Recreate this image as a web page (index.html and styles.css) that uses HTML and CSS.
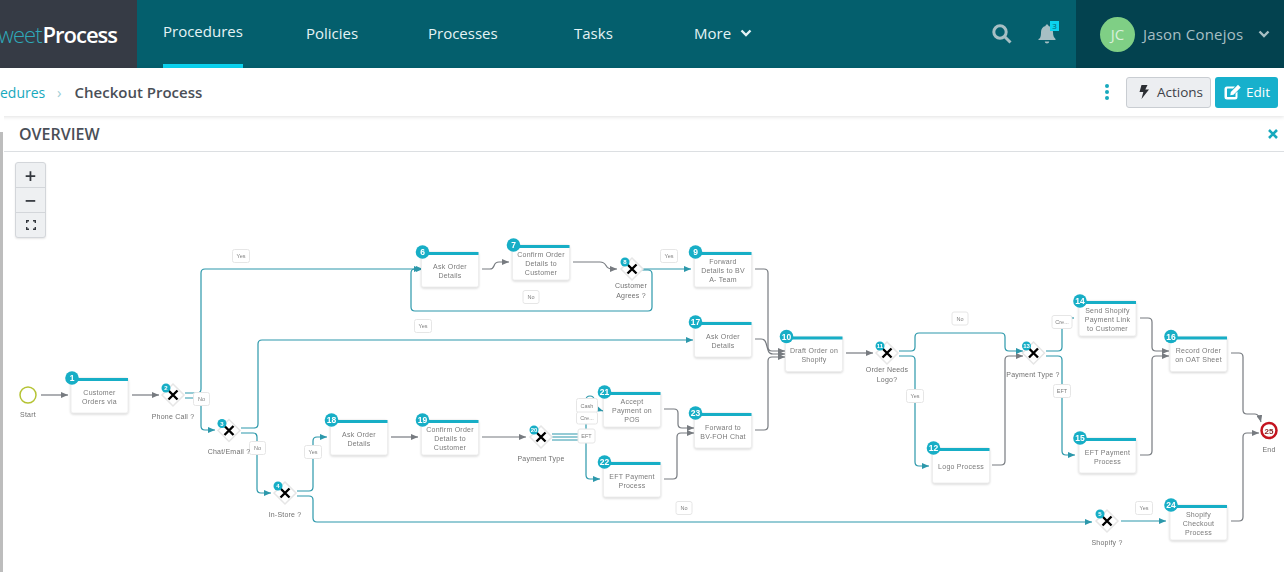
FILE: index.html
```html
<!DOCTYPE html>
<html>
<head>
  <title>Checkout Process</title>
  <link rel="stylesheet" href="styles.css">
</head>
<body>
  <header class="topbar">
    <div class="logo"><span class="logo-light">weet</span><span class="logo-bold">Process</span></div>
    <nav class="nav">
      <a class="nav-item active">Procedures</a>
      <a class="nav-item">Policies</a>
      <a class="nav-item">Processes</a>
      <a class="nav-item">Tasks</a>
      <a class="nav-item more">More
        <svg class="chevron" width="12" height="8" viewBox="0 0 12 8"><path d="M1.5 1.5 6 6l4.500-4.500"/></svg>
      </a>
    </nav>
    <div class="tools">
      <svg class="search-icon" width="22" height="22" viewBox="0 0 22 22"><circle cx="9" cy="9" r="6.200"/><path d="M13.500 13.500 19.500 19.500"/></svg>
      <div class="bell">
        <svg width="20" height="22" viewBox="0 0 20 22"><path d="M10 1.500c1 0 1.500.7 1.500 1.500 3 .7 4.500 3 4.500 6 0 4 1 5.500 2.500 7v1H1.500v-1C3 15.500 4 14 4 9c0-3 1.500-5.300 4.500-6 0-.8.500-1.500 1.500-1.500zM7.800 18.500h4.400c0 1.200-1 2-2.200 2s-2.200-.8-2.200-2z"/></svg>
        <span class="bell-count">3</span>
      </div>
    </div>
    <div class="user">
      <div class="avatar">JC</div>
      <span class="user-name">Jason Conejos</span>
      <svg class="chevron" width="12" height="8" viewBox="0 0 12 8"><path d="M1.500 1.500 6 6l4.500-4.500"/></svg>
    </div>
  </header>

  <div class="subbar">
    <a class="crumb-link">edures</a>
    <span class="crumb-sep">›</span>
    <span class="crumb-current">Checkout Process</span>
    <div class="subbar-actions">
      <div class="kebab"><i></i><i></i><i></i></div>
      <button class="btn btn-actions">
        <svg width="12" height="16" viewBox="0 0 12 16"><path d="M3.500 1h6L7.300 5.500H11L3.500 15l1.800-7H1.500z"/></svg>
        Actions
      </button>
      <button class="btn btn-edit">
        <svg width="18" height="16" viewBox="0 0 18 16"><path d="M3 2.500h8L9 4.500H3.500a.5.5 0 0 0-.5.500v7.500a.5.5 0 0 0 .5.500H11a.5.5 0 0 0 .5-.5V9.500l2-2v5.500a2.500 2.500 0 0 1-2.500 2.500H3A2.500 2.500 0 0 1 .5 13V5A2.500 2.500 0 0 1 3 2.500zM14 .8l2.700 2.700-7.200 7.200-3.200.5.500-3.200z"/></svg>
        Edit
      </button>
    </div>
  </div>

  <main class="panel">
    <div class="panel-head">
      <h2 class="panel-title">OVERVIEW</h2>
      <svg class="panel-close" width="12" height="12" viewBox="0 0 12 12"><path d="M2 2l8 8M10 2l-8 8"/></svg>
    </div>
    <div class="stage">
      <div class="zoom-controls">
        <div class="zoom-btn">+</div>
        <div class="zoom-btn">−</div>
        <div class="zoom-btn">
          <svg width="10" height="10" viewBox="0 0 10 10"><path d="M.7 3V.7H3M7 .7h2.300V3M9.300 7v2.300H7M3 9.300H.7V7"/></svg>
        </div>
      </div>

      <svg class="diagram" width="1284" height="420" viewBox="0 152 1284 420">
        <defs>
          <marker id="arrow-gray" markerUnits="userSpaceOnUse" markerWidth="7" markerHeight="6" refX="7" refY="3" orient="auto"><path d="M0 0 7 3 0 6z" fill="#777b80"/></marker>
          <marker id="arrow-teal" markerUnits="userSpaceOnUse" markerWidth="7" markerHeight="6" refX="7" refY="3" orient="auto"><path d="M0 0 7 3 0 6z" fill="#2c98ab"/></marker>
        </defs>

        <!-- flechas grises -->
        <g class="edge edge-gray">
          <path d="M41 395H68"/>
          <path d="M132 395H159"/>
          <path d="M391 437H418"/>
          <path d="M482 437H526"/>
          <path d="M482 269H490C496 269 492 262 499 262H509"/>
          <path d="M573 262H600C608 262 604 269 612 269H617"/>
          <path d="M664 409H674q4 0 4 4V424q0 4 4 4H694"/>
          <path d="M664 479H673q4 0 4-4V437q0-4 4-4H694"/>
          <path d="M755 269H764q4 0 4 4V347q0 4 4 4H785"/>
          <path d="M755 339H761q4 0 5 4L768 350q1 4 5 4H785"/>
          <path d="M755 430H764q4 0 4-4V361q0-4 4-4H785"/>
          <path d="M846 353H873"/>
          <path d="M992 465H1001q4 0 4-4V360q0-4 4-4H1023"/>
          <path d="M1140 318H1148q4 0 4 4V347q0 4 4 4H1169"/>
          <path d="M1140 455H1148q4 0 4-4V360q0-4 4-4H1169"/>
          <path d="M1231 353H1239q4 0 4 4V410q0 4 4 4H1255q4 0 6 8"/>
          <path d="M1231 521H1239q4 0 4-4V437q0-4 4-4H1259"/>
        </g>

        <!-- flechas de las decisiones -->
        <g class="edge edge-teal">
          <path d="M185 393H197q4 0 4-4V273q0-4 4-4H421"/>
          <path d="M185 398H198q3 0 3 3V426q0 4 4 4H215"/>
          <path d="M241 428H254q4 0 4-4V344q0-4 4-4H693"/>
          <path d="M241 433H253q4 0 4 4V489q0 4 4 4H271"/>
          <path d="M297 491H309q4 0 4-4V441q0-4 4-4H327"/>
          <path d="M297 496H309q4 0 4 4V518q0 4 4 4H1092"/>
          <path d="M552 434H586V400q0-4 4-4t4 4V408"/>
          <path d="M594 408L603 411"/>
          <path d="M552 437H586"/>
          <path d="M552 440H586V475q0 4 4 4H600"/>
          <path d="M641 269H691"/>
          <path d="M641 270H648q4 0 4 4V307q0 4-4 4H415q-4 0-4-4V273q0-4 4-4H423"/>
          <path d="M899 351H911q4 0 4-4V337q0-4 4-4H1001q4 0 4 4V347q0 4 4 4H1023"/>
          <path d="M899 356H911q4 0 4 4V462q0 4 4 4H929"/>
          <path d="M1046 351H1058q4 0 4-4V322q0-4 4-4H1074"/>
          <path d="M1046 356H1058q4 0 4 4V451q0 4 4 4H1075"/>
          <path d="M1121 521H1166"/>
        </g>

        <!-- etiquetas -->
        <g class="tag" transform="translate(241,256)"><rect x="-8.500" y="-6.500" width="17" height="13"/><text y="2">Yes</text></g>
        <g class="tag" transform="translate(669,256)"><rect x="-8.500" y="-6.500" width="17" height="13"/><text y="2">Yes</text></g>
        <g class="tag" transform="translate(531,297)"><rect x="-8" y="-6.500" width="16" height="13"/><text y="2">No</text></g>
        <g class="tag" transform="translate(423,326)"><rect x="-8.500" y="-6.500" width="17" height="13"/><text y="2">Yes</text></g>
        <g class="tag" transform="translate(201.500,399)"><rect x="-8" y="-6.500" width="16" height="13"/><text y="2">No</text></g>
        <g class="tag" transform="translate(257.500,448)"><rect x="-8" y="-6.500" width="16" height="13"/><text y="2">No</text></g>
        <g class="tag" transform="translate(313,452)"><rect x="-8.500" y="-6.500" width="17" height="13"/><text y="2">Yes</text></g>
        <g class="tag" transform="translate(684,508)"><rect x="-8" y="-6.500" width="16" height="13"/><text y="2">No</text></g>
        <g class="tag" transform="translate(960,318.500)"><rect x="-8" y="-6.500" width="16" height="13"/><text y="2">No</text></g>
        <g class="tag" transform="translate(915,396)"><rect x="-8.500" y="-6.500" width="17" height="13"/><text y="2">Yes</text></g>
        <g class="tag" transform="translate(1062,322)"><rect x="-10" y="-6.500" width="20" height="13"/><text y="2">Cre...</text></g>
        <g class="tag" transform="translate(1062,391)"><rect x="-8.500" y="-6.500" width="17" height="13"/><text y="2">EFT</text></g>
        <g class="tag" transform="translate(1144,508)"><rect x="-8.500" y="-6.500" width="17" height="13"/><text y="2">Yes</text></g>
        <g class="tag" transform="translate(587,405.500)"><rect x="-10.500" y="-7" width="21" height="14"/><text y="2">Cash</text></g>
        <g class="tag" transform="translate(587,418)"><rect x="-10.500" y="-6" width="21" height="12"/><text y="2">Cre...</text></g>
        <g class="tag" transform="translate(586.500,436)"><rect x="-8.500" y="-7" width="17" height="14"/><text y="2">EFT</text></g>

        <!-- inicio y fin -->
        <circle class="start" cx="28" cy="395" r="8"/>
        <text class="caption" x="28" y="417">Start</text>
        <circle class="end" cx="1269" cy="430.500" r="7.500"/>
        <text class="end-num" x="1269" y="433.500">25</text>
        <text class="caption" x="1269" y="452">End</text>

        <!-- tareas -->
        <g class="task" transform="translate(71,378)"><rect width="57" height="35"/><path class="task-bar" d="M0 1.500H57"/><circle cx="1" cy="0" r="6.800"/><text class="num" x="1" y="3">1</text><text x="28.500" y="16.500">Customer</text><text x="28.500" y="25.500">Orders via</text></g>
        <g class="task" transform="translate(421.500,252)"><rect width="57" height="35"/><path class="task-bar" d="M0 1.500H57"/><circle cx="1" cy="0" r="6.800"/><text class="num" x="1" y="3">6</text><text x="28.500" y="16.500">Ask Order</text><text x="28.500" y="25.500">Details</text></g>
        <g class="task" transform="translate(512.500,245)"><rect width="57" height="35"/><path class="task-bar" d="M0 1.500H57"/><circle cx="1" cy="0" r="6.800"/><text class="num" x="1" y="3">7</text><text x="28.500" y="12">Confirm Order</text><text x="28.500" y="21">Details to</text><text x="28.500" y="30">Customer</text></g>
        <g class="task" transform="translate(694.500,252)"><rect width="57" height="35"/><path class="task-bar" d="M0 1.500H57"/><circle cx="1" cy="0" r="6.800"/><text class="num" x="1" y="3">9</text><text x="28.500" y="12">Forward</text><text x="28.500" y="21">Details to BV</text><text x="28.500" y="30">A- Team</text></g>
        <g class="task" transform="translate(694.500,322)"><rect width="57" height="35"/><path class="task-bar" d="M0 1.500H57"/><circle cx="1" cy="0" r="6.800"/><text class="num" x="1" y="3">17</text><text x="28.500" y="16.500">Ask Order</text><text x="28.500" y="25.500">Details</text></g>
        <g class="task" transform="translate(785.500,336.500)"><rect width="57" height="35"/><path class="task-bar" d="M0 1.500H57"/><circle cx="1" cy="0" r="6.800"/><text class="num" x="1" y="3">10</text><text x="28.500" y="16.500">Draft Order on</text><text x="28.500" y="25.500">Shopify</text></g>
        <g class="task" transform="translate(932.500,448)"><rect width="57" height="35"/><path class="task-bar" d="M0 1.500H57"/><circle cx="1" cy="0" r="6.800"/><text class="num" x="1" y="3">12</text><text x="28.500" y="21">Logo Process</text></g>
        <g class="task" transform="translate(1079,301)"><rect width="57" height="35"/><path class="task-bar" d="M0 1.500H57"/><circle cx="1" cy="0" r="6.800"/><text class="num" x="1" y="3">14</text><text x="28.500" y="12">Send Shopify</text><text x="28.500" y="21">Payment Link</text><text x="28.500" y="30">to Customer</text></g>
        <g class="task" transform="translate(1079,438)"><rect width="57" height="35"/><path class="task-bar" d="M0 1.500H57"/><circle cx="1" cy="0" r="6.800"/><text class="num" x="1" y="3">15</text><text x="28.500" y="16.500">EFT Payment</text><text x="28.500" y="25.500">Process</text></g>
        <g class="task" transform="translate(1170,336.500)"><rect width="57" height="35"/><path class="task-bar" d="M0 1.500H57"/><circle cx="1" cy="0" r="6.800"/><text class="num" x="1" y="3">16</text><text x="28.500" y="16.500">Record Order</text><text x="28.500" y="25.500">on OAT Sheet</text></g>
        <g class="task" transform="translate(1170,505)"><rect width="57" height="35"/><path class="task-bar" d="M0 1.500H57"/><circle cx="1" cy="0" r="6.800"/><text class="num" x="1" y="3">24</text><text x="28.500" y="12">Shopify</text><text x="28.500" y="21">Checkout</text><text x="28.500" y="30">Process</text></g>
        <g class="task" transform="translate(330.500,420)"><rect width="57" height="35"/><path class="task-bar" d="M0 1.500H57"/><circle cx="1" cy="0" r="6.800"/><text class="num" x="1" y="3">18</text><text x="28.500" y="16.500">Ask Order</text><text x="28.500" y="25.500">Details</text></g>
        <g class="task" transform="translate(421.500,420)"><rect width="57" height="35"/><path class="task-bar" d="M0 1.500H57"/><circle cx="1" cy="0" r="6.800"/><text class="num" x="1" y="3">19</text><text x="28.500" y="12">Confirm Order</text><text x="28.500" y="21">Details to</text><text x="28.500" y="30">Customer</text></g>
        <g class="task" transform="translate(603.500,392)"><rect width="57" height="35"/><path class="task-bar" d="M0 1.500H57"/><circle cx="1" cy="0" r="6.800"/><text class="num" x="1" y="3">21</text><text x="28.500" y="12">Accept</text><text x="28.500" y="21">Payment on</text><text x="28.500" y="30">POS</text></g>
        <g class="task" transform="translate(603.500,462)"><rect width="57" height="35"/><path class="task-bar" d="M0 1.500H57"/><circle cx="1" cy="0" r="6.800"/><text class="num" x="1" y="3">22</text><text x="28.500" y="16.500">EFT Payment</text><text x="28.500" y="25.500">Process</text></g>
        <g class="task" transform="translate(694.500,413)"><rect width="57" height="35"/><path class="task-bar" d="M0 1.500H57"/><circle cx="1" cy="0" r="6.800"/><text class="num" x="1" y="3">23</text><text x="28.500" y="16.500">Forward to</text><text x="28.500" y="25.500">BV-FOH Chat</text></g>

        <!-- decisiones -->
        <g class="gate" transform="translate(173,395)"><polygon points="0,-11 11,0 0,11 -11,0"/><path d="M-4.500-4.500 4.500 4.500M4.500-4.500-4.500 4.500"/><circle cx="-7" cy="-7" r="4.500"/><text x="-7" y="-5">2</text></g>
        <g class="gate" transform="translate(229,430.500)"><polygon points="0,-11 11,0 0,11 -11,0"/><path d="M-4.500-4.500 4.500 4.500M4.500-4.500-4.500 4.500"/><circle cx="-7" cy="-7" r="4.500"/><text x="-7" y="-5">3</text></g>
        <g class="gate" transform="translate(285,493)"><polygon points="0,-11 11,0 0,11 -11,0"/><path d="M-4.500-4.500 4.500 4.500M4.500-4.500-4.500 4.500"/><circle cx="-7" cy="-7" r="4.500"/><text x="-7" y="-5">4</text></g>
        <g class="gate" transform="translate(541,437)"><polygon points="0,-11 11,0 0,11 -11,0"/><path d="M-4.500-4.500 4.500 4.500M4.500-4.500-4.500 4.500"/><circle cx="-7" cy="-7" r="4.500"/><text x="-7" y="-5">20</text></g>
        <g class="gate" transform="translate(632,269)"><polygon points="0,-11 11,0 0,11 -11,0"/><path d="M-4.500-4.500 4.500 4.500M4.500-4.500-4.500 4.500"/><circle cx="-7" cy="-7" r="4.500"/><text x="-7" y="-5">8</text></g>
        <g class="gate" transform="translate(887,353)"><polygon points="0,-11 11,0 0,11 -11,0"/><path d="M-4.500-4.500 4.500 4.500M4.500-4.500-4.500 4.500"/><circle cx="-7" cy="-7" r="4.500"/><text x="-7" y="-5">11</text></g>
        <g class="gate" transform="translate(1033.500,353)"><polygon points="0,-11 11,0 0,11 -11,0"/><path d="M-4.500-4.500 4.500 4.500M4.500-4.500-4.500 4.500"/><circle cx="-7" cy="-7" r="4.500"/><text x="-7" y="-5">13</text></g>
        <g class="gate" transform="translate(1107,521)"><polygon points="0,-11 11,0 0,11 -11,0"/><path d="M-4.500-4.500 4.500 4.500M4.500-4.500-4.500 4.500"/><circle cx="-7" cy="-7" r="4.500"/><text x="-7" y="-5">5</text></g>

        <text class="caption" x="173" y="419">Phone Call ?</text>
        <text class="caption" x="229" y="454">Chat/Email ?</text>
        <text class="caption" x="285" y="517">In-Store ?</text>
        <text class="caption" x="541" y="461">Payment Type</text>
        <text class="caption" x="631" y="288">Customer</text>
        <text class="caption" x="631" y="298">Agrees ?</text>
        <text class="caption" x="887" y="372">Order Needs</text>
        <text class="caption" x="887" y="382">Logo?</text>
        <text class="caption" x="1033" y="377">Payment Type ?</text>
        <text class="caption" x="1107" y="545">Shopify ?</text>
      </svg>
    </div>
  </main>
</body>
</html>
```

FILE: styles.css
```css
html, body {
  margin: 0;
  height: 100%;
  overflow: hidden;
}

body {
  background-color: white;
  font-family: "Open Sans", "Liberation Sans", sans-serif;
  color: #4a4f57;
}

/* barra superior */
.topbar {
  display: flex;
  height: 68px;
  background-color: #045f6d;
}

.logo {
  display: flex;
  justify-content: flex-end;
  align-items: center;
  width: 137px;
  padding-right: 20px;
  box-sizing: border-box;
  background-color: #363b45;
  font-size: 22px;
  letter-spacing: -1px;
}

.logo-light {
  color: #2ea9b9;
  font-weight: 300;
}

.logo-bold {
  color: white;
  font-weight: 600;
  margin-left: 1px;
}

.nav {
  display: grid;
  grid-template-columns: 143px 122px 146px 120px auto;
  justify-items: start;
  flex: 1;
  padding-left: 26px;
}

.nav-item {
  display: flex;
  align-items: center;
  gap: 9px;
  padding-bottom: 2px;
  box-sizing: border-box;
  color: #e4f3f5;
  font-size: 15px;
}

.nav-item.active {
  border-bottom: 4px solid #0bd2ee;
}

.chevron path {
  fill: none;
  stroke: #e4f3f5;
  stroke-width: 2.400;
}

.tools {
  display: flex;
  align-items: center;
  gap: 24px;
  padding-right: 19px;
}

.search-icon circle,
.search-icon path {
  fill: none;
  stroke: #a7bfc4;
  stroke-width: 3;
}

.bell {
  position: relative;
  display: flex;
}

.bell svg {
  fill: #a7bfc4;
}

.bell-count {
  position: absolute;
  top: -2px;
  right: -2px;
  width: 9px;
  height: 10px;
  background-color: #0bd2ee;
  color: #045f6d;
  font-size: 8px;
  line-height: 10px;
  text-align: center;
}

.user {
  display: flex;
  align-items: center;
  width: 208px;
  box-sizing: border-box;
  padding-left: 24px;
  background-color: #03424f;
}

.avatar {
  display: flex;
  align-items: center;
  justify-content: center;
  width: 35px;
  height: 35px;
  border-radius: 50%;
  background-color: #7fcf85;
  color: #d8f0da;
  font-size: 15px;
}

.user-name {
  margin-left: 8px;
  color: #a7bfc4;
  font-size: 15px;
  letter-spacing: .2px;
}

.user .chevron {
  margin-left: 15px;
}

.user .chevron path {
  stroke: #a7bfc4;
}

/* migas */
.subbar {
  position: relative;
  display: flex;
  align-items: center;
  height: 48px;
  padding-right: 6px;
  box-shadow: 0 1px 4px rgba(0, 0, 0, 0.12);
  font-size: 15px;
}

.crumb-link {
  width: 45px;
  color: #17a9bd;
  font-size: 14px;
}

.crumb-sep {
  margin-left: 12px;
  color: #9ccdd5;
}

.crumb-current {
  margin-left: 13px;
  font-weight: 600;
}

.subbar-actions {
  display: flex;
  align-items: center;
  margin-left: auto;
}

.kebab {
  display: flex;
  flex-direction: column;
  gap: 2px;
  margin-right: 17px;
}

.kebab i {
  width: 4px;
  height: 4px;
  border-radius: 50%;
  background-color: #17a9bd;
}

.btn {
  display: flex;
  align-items: center;
  gap: 7px;
  height: 31px;
  box-sizing: border-box;
  border-radius: 3px;
  font-family: inherit;
  font-size: 13.500px;
}

.btn-actions {
  width: 85px;
  padding: 0 0 0 11px;
  border: 1px solid #c9cdd2;
  background-color: #eceef1;
  color: #3d4148;
}

.btn-actions svg {
  fill: #2b2e33;
}

.btn-edit {
  width: 63px;
  margin-left: 4px;
  padding: 0 0 0 9px;
  gap: 4px;
  border: none;
  background-color: #17b0cc;
  color: white;
}

.btn-edit svg {
  fill: white;
}

/* panel */
.panel {
  position: relative;
  border-left: 4px solid white;
}

.panel::before {
  content: "";
  position: absolute;
  left: -4px;
  top: 16px;
  bottom: 0;
  width: 3px;
  background-color: #bdbdbd;
}

.panel-head {
  display: flex;
  align-items: center;
  justify-content: space-between;
  height: 35px;
  padding: 0 5px 0 15px;
  border-bottom: 1px solid #dcdfe2;
}

.panel-title {
  margin: 0;
  font-size: 16px;
  font-weight: 600;
  color: #4a4f57;
}

.panel-close path {
  fill: none;
  stroke: #17a9bd;
  stroke-width: 2.600;
}

.stage {
  position: relative;
  height: 420px;
  margin-left: -4px;
}

.diagram {
  display: block;
  will-change: opacity;
}

.zoom-controls {
  position: absolute;
  z-index: 1;
  top: 10px;
  left: 15px;
  width: 29px;
  border: 1px solid #d3d6da;
  border-radius: 3px;
  background-color: #eef0f2;
  box-shadow: 0 1px 2px rgba(0, 0, 0, 0.1);
}

.zoom-btn {
  display: flex;
  align-items: center;
  justify-content: center;
  height: 24px;
  border-bottom: 1px solid #d3d6da;
  color: #33373d;
  font-size: 20px;
  font-weight: 600;
}

.zoom-btn:last-child {
  border-bottom: none;
}

.zoom-btn path {
  fill: none;
  stroke: #33373d;
  stroke-width: 1.400;
}

/* diagrama */
.diagram text {
  font-family: "Liberation Sans", sans-serif;
  text-anchor: middle;
}

.edge path {
  fill: none;
  stroke-width: 1.200;
}

.edge-gray path {
  stroke: #777b80;
  marker-end: url(#arrow-gray);
}

.edge-teal path {
  stroke: #2c98ab;
  marker-end: url(#arrow-teal);
}

.tag rect {
  fill: white;
  stroke: #e6e6e6;
  rx: 2px;
}

.tag text {
  fill: #808080;
  font-size: 5.500px;
}

.caption {
  fill: #707070;
  font-size: 7px;
  letter-spacing: .2px;
}

.start {
  fill: white;
  stroke: #b5c334;
  stroke-width: 1.500;
}

.end {
  fill: white;
  stroke: #c4141f;
  stroke-width: 2.500;
}

.end-num {
  fill: #8a2a2a;
  font-size: 8px;
  font-weight: bold;
}

.task rect {
  fill: white;
  rx: 2px;
  stroke: #eeeeee;
  filter: drop-shadow(0 1px 1px rgba(0, 0, 0, 0.16));
}

.task-bar {
  fill: none;
  stroke: #17aec6;
  stroke-width: 3;
}

.task circle {
  fill: #17aec6;
}

.task text {
  fill: #7a7a7a;
  font-size: 7px;
  letter-spacing: .25px;
}

.task text.num {
  fill: white;
  font-size: 8.500px;
  font-weight: bold;
  letter-spacing: 0;
}

.gate polygon {
  fill: white;
  stroke: #e6e6e6;
  stroke-width: 1.500;
}

.gate path {
  fill: none;
  stroke: black;
  stroke-width: 2.400;
}

.gate circle {
  fill: #17aec6;
}

.gate text {
  fill: white;
  font-size: 6px;
  font-weight: bold;
}
```
